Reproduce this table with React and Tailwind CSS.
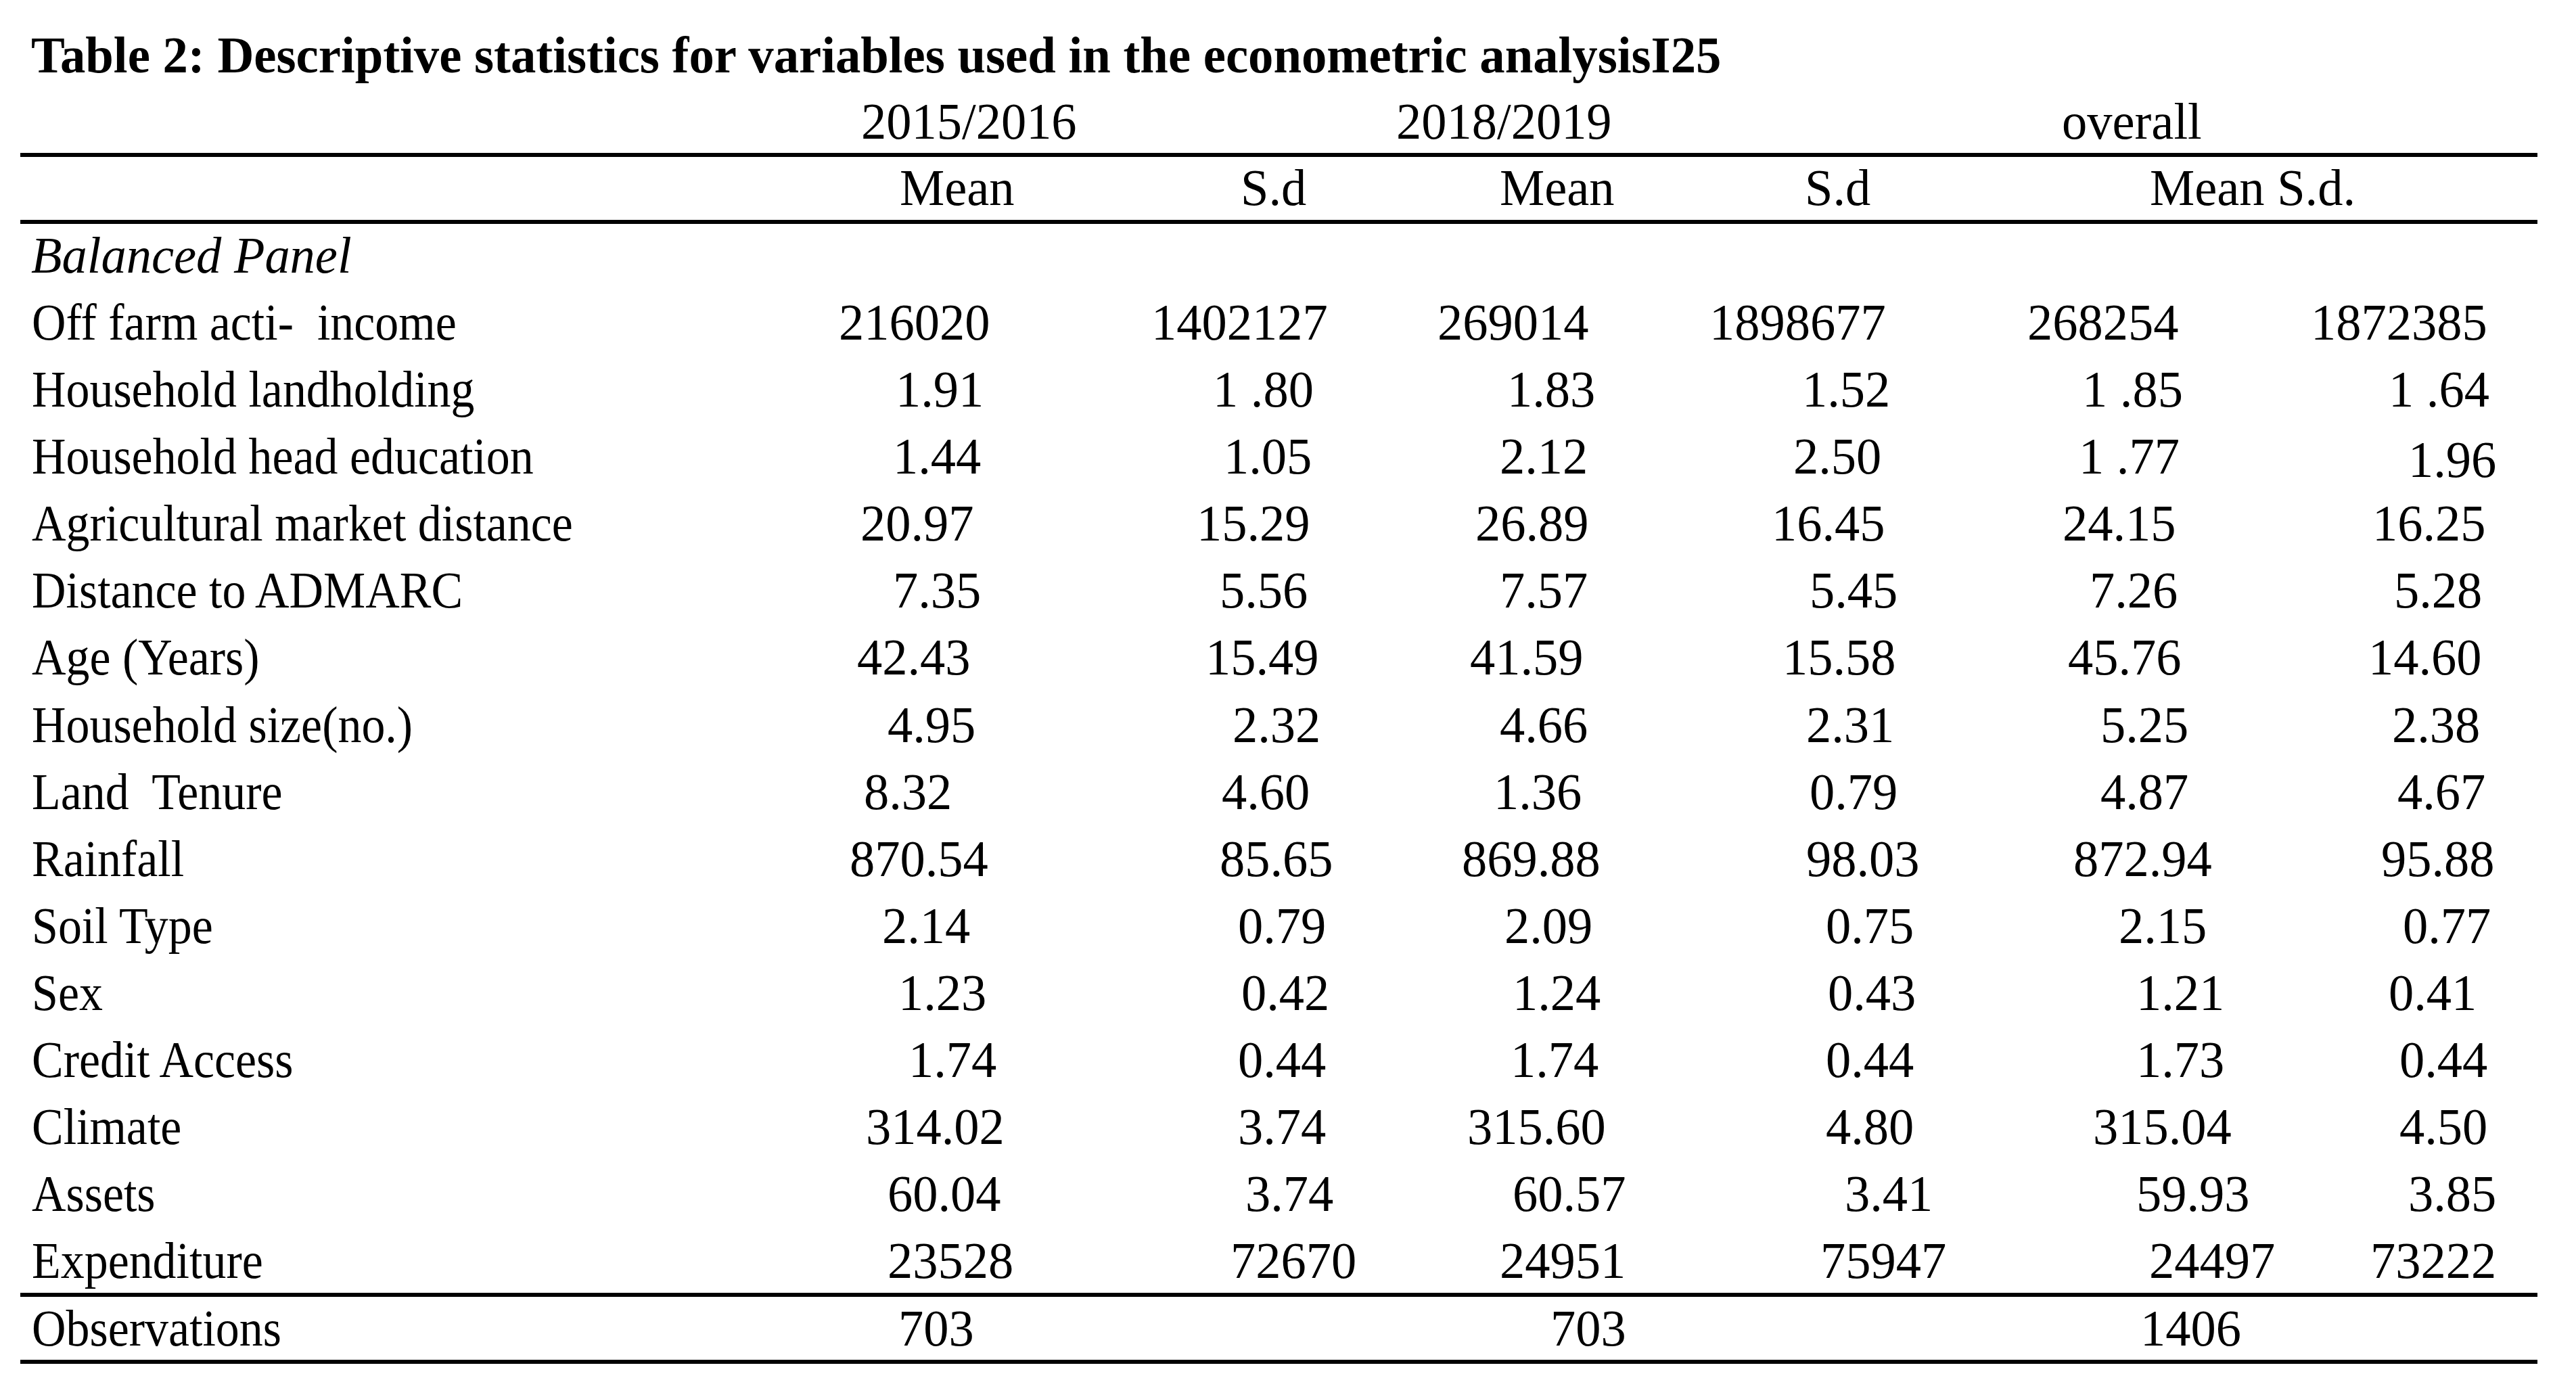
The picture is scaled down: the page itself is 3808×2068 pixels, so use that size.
import React from "react";
import clsx from "clsx";

// column tracks: label | 2015 mean | 2015 sd | 2018 mean | 2018 sd | overall mean | overall sd
const GRID =
  "grid grid-cols-[1200px_480px_440px_380px_460px_440px_408px] whitespace-pre";

const rows = [
  ["Off farm acti-\u00a0 income", [["216020", "pl-[40px]"], ["1402127", "pl-[22px]"], ["269014", "pl-[5px]"], ["1898677", "pl-[27px]"], ["268254", "pl-[37px]"], ["1872385", "pl-[16px]"]]],
  ["Household landholding", [["1.91", "pl-[124px]"], ["1 .80", "pl-[113px]"], ["1.83", "pl-[108px]"], ["1.52", "pl-[164px]"], ["1 .85", "pl-[118px]"], ["1 .64", "pl-[131px]"]]],
  ["Household head education", [["1.44", "pl-[120px]"], ["1.05", "pl-[129px]"], ["2.12", "pl-[97px]"], ["2.50", "pl-[151px]"], ["1 .77", "pl-[113px]"], ["1.96", "pl-[160px] pt-[5px]"]]],
  ["Agricultural market distance", [["20.97", "pl-[72px]"], ["15.29", "pl-[89px]"], ["26.89", "pl-[61px]"], ["16.45", "pl-[119px]"], ["24.15", "pl-[89px]"], ["16.25", "pl-[107px]"]]],
  ["Distance to ADMARC", [["7.35", "pl-[120px]"], ["5.56", "pl-[123px]"], ["7.57", "pl-[97px]"], ["5.45", "pl-[175px]"], ["7.26", "pl-[129px]"], ["5.28", "pl-[139px]"]]],
  ["Age (Years)", [["42.43", "pl-[67px]"], ["15.49", "pl-[102px]"], ["41.59", "pl-[53px]"], ["15.58", "pl-[135px]"], ["45.76", "pl-[97px]"], ["14.60", "pl-[101px]"]]],
  ["Household size(no.)", [["4.95", "pl-[112px]"], ["2.32", "pl-[142px]"], ["4.66", "pl-[97px]"], ["2.31", "pl-[170px]"], ["5.25", "pl-[145px]"], ["2.38", "pl-[136px]"]]],
  ["Land\u00a0 Tenure", [["8.32", "pl-[77px]"], ["4.60", "pl-[126px]"], ["1.36", "pl-[88px]"], ["0.79", "pl-[175px]"], ["4.87", "pl-[145px]"], ["4.67", "pl-[144px]"]]],
  ["Rainfall", [["870.54", "pl-[56px]"], ["85.65", "pl-[123px]"], ["869.88", "pl-[41px]"], ["98.03", "pl-[170px]"], ["872.94", "pl-[105px]"], ["95.88", "pl-[120px]"]]],
  ["Soil Type", [["2.14", "pl-[104px]"], ["0.79", "pl-[150px]"], ["2.09", "pl-[104px]"], ["0.75", "pl-[199px]"], ["2.15", "pl-[172px]"], ["0.77", "pl-[152px]"]]],
  ["Sex", [["1.23", "pl-[128px]"], ["0.42", "pl-[155px]"], ["1.24", "pl-[116px]"], ["0.43", "pl-[202px]"], ["1.21", "pl-[198px]"], ["0.41", "pl-[131px]"]]],
  ["Credit Access", [["1.74", "pl-[143px]"], ["0.44", "pl-[150px]"], ["1.74", "pl-[113px]"], ["0.44", "pl-[199px]"], ["1.73", "pl-[198px]"], ["0.44", "pl-[147px]"]]],
  ["Climate", [["314.02", "pl-[80px]"], ["3.74", "pl-[150px]"], ["315.60", "pl-[49px]"], ["4.80", "pl-[199px]"], ["315.04", "pl-[134px]"], ["4.50", "pl-[147px]"]]],
  ["Assets", [["60.04", "pl-[112px]"], ["3.74", "pl-[161px]"], ["60.57", "pl-[116px]"], ["3.41", "pl-[227px]"], ["59.93", "pl-[198px]"], ["3.85", "pl-[160px]"]]],
  ["Expenditure", [["23528", "pl-[112px]"], ["72670", "pl-[139px]"], ["24951", "pl-[97px]"], ["75947", "pl-[191px]"], ["24497", "pl-[217px]"], ["73222", "pl-[104px]"]]],
];

function Txt({ children, className }) {
  return (
    <span className={clsx("inline-block origin-left", className ?? "scale-x-[0.98]")}>
      {children}
    </span>
  );
}

// label column text is set narrower than the figures
function Label({ text, className }) {
  return (
    <div className={clsx("pl-[47px]", className)}>
      <Txt className="scale-x-[0.92]">{text}</Txt>
    </div>
  );
}

function Cell({ text, className }) {
  return (
    <div className={className}>
      {text ? <Txt>{text}</Txt> : null}
    </div>
  );
}

function Rule({ className }) {
  return <div className={clsx("ml-[30px] w-[3721px] bg-black", className)} />;
}

export default function App() {
  return (
    <div className="w-[3808px] h-[2068px] overflow-hidden bg-white pt-[39px] text-black font-['Liberation_Serif','Times_New_Roman',serif] text-[76px] leading-[84px]">
      {/* Title */}
      <div className="pl-[46px] font-bold whitespace-pre">
        <Txt className="scale-x-[0.983]">
          Table 2: Descriptive statistics for variables used in the econometric analysisI25
        </Txt>
      </div>

      {/* Period headers */}
      <div className={clsx(GRID, "mt-[14px]")}>
        <div />
        <Cell text="2015/2016" className="pl-[73px]" />
        <Cell text="2018/2019" className="pl-[384px]" />
        <div />
        <div />
        <Cell text="overall" className="pl-[88px]" />
        <div />
      </div>
      <Rule className="mt-[5px] h-[6px]" />

      {/* Stat headers */}
      <div className={clsx(GRID, "mt-[3px]")}>
        <div />
        <Cell text="Mean" className="pl-[130px]" />
        <Cell text="S.d" className="pl-[154px]" />
        <Cell text="Mean" className="pl-[97px]" />
        <Cell text="S.d" className="pl-[168px]" />
        <Cell text="Mean S.d." className="pl-[218px]" />
        <div />
      </div>
      <Rule className="mt-[6px] h-[6px]" />

      <div className="mt-[4px] pl-[46px] italic whitespace-pre">
        <Txt className="scale-x-[0.98]">Balanced Panel</Txt>
      </div>

      {/* Body */}
      <div className="mt-[8px]">
        {rows.map(([label, cells]) => (
          <div key={label} className={clsx(GRID, "h-[99.1px] leading-[99.1px]")}>
            <Label text={label} />
            {cells.map(([v, pad], i) => (
              <Cell key={i} text={v} className={pad} />
            ))}
          </div>
        ))}
      </div>
      <Rule className="-mt-[2.5px] h-[6px]" />

      <div className={clsx(GRID, "mt-[4px]")}>
        <Label text="Observations" />
        <Cell text="703" className="pl-[128px]" />
        <div />
        <Cell text="703" className="pl-[172px]" />
        <div />
        <Cell text="1406" className="pl-[204px]" />
        <div />
      </div>
      <Rule className="mt-[5px] h-[6px]" />
    </div>
  );
}
